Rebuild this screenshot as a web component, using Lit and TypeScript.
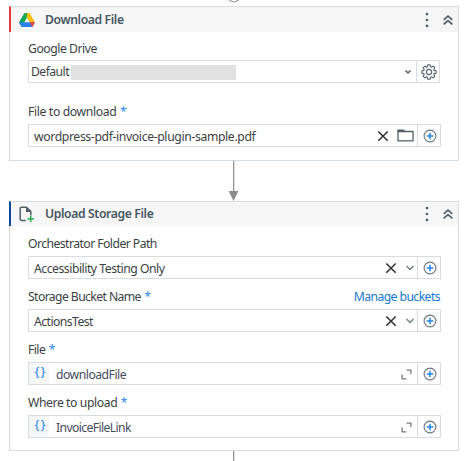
import { LitElement, html, css, svg, nothing } from "lit";
import { customElement, property } from "lit/decorators.js";

const icons = {
  drive: svg`<svg width="16" height="14" viewBox="0 0 16 14">
    <path d="M5.4 0L0 9.3 2.7 14 8 4.6z" fill="#11a853"/>
    <path d="M10.6 0L16 9.3h-5.3L5.4 0z" fill="#fdbc0a"/>
    <path d="M5.4 0H8v4.6z" fill="#11a853"/>
    <path d="M5.3 9.3H16L13.3 14H2.7z" fill="#2a7df5"/>
    <path d="M0 9.3h5.3L2.7 14z" fill="#2a7df5"/>
    <path d="M10.7 9.3H16L13.3 14z" fill="#ea4335"/></svg>`,
  storage: svg`<svg width="16" height="17" viewBox="0 0 16 17">
    <path d="M6.8 14.4H2.6q-1.4 0-1.4-1.4V2.6q0-1.4 1.4-1.4h4.7l4.5 4.2v4.2" fill="none" stroke="#526069" stroke-width="1.5"/>
    <path d="M7 .8l5.3 5.1H7z" fill="#526069"/>
    <path d="M11.7 9.8v6.2M8.6 12.9h6.2" stroke="#36b35c" stroke-width="1.6"/></svg>`,
  dots: svg`<svg width="4" height="16" viewBox="0 0 4 16" fill="#526069"><circle cx="2" cy="2.1" r="1.35"/><circle cx="2" cy="8" r="1.35"/><circle cx="2" cy="13.9" r="1.35"/></svg>`,
  collapse: svg`<svg width="10" height="10" viewBox="0 0 10 10" fill="none" stroke="#526069" stroke-width="1.7"><path d="M.6 4.9L5 1.2l4.4 3.7M.6 9.4L5 5.7l4.4 3.7"/></svg>`,
  clear: svg`<svg width="12" height="12" viewBox="0 0 12 12" stroke="#333" stroke-width="1.6"><path d="M1.3 1.5l9.4 9.2M10.7 1.5l-9.4 9.2"/></svg>`,
  chevron: svg`<svg width="8" height="6" viewBox="0 0 8 6" fill="none" stroke="#737b80" stroke-width="1.4"><path d="M.6 1L4 4.4 7.4 1"/></svg>`,
  caret: svg`<svg width="8" height="6" viewBox="0 0 8 6" fill="none" stroke="#59636a" stroke-width="1.5"><path d="M1.4 1.5L4 3.9l2.6-2.4"/></svg>`,
  folder: svg`<svg width="17" height="13" viewBox="0 0 17 13"><path d="M1 2.5h15v9.3H1z" fill="none" stroke="#526069" stroke-width="1.3"/><path d="M.4.6h6.4l1.8 2.2H.4z" fill="#526069"/></svg>`,
  expand: svg`<svg width="11" height="11" viewBox="0 0 11 11" fill="none" stroke="#737b80" stroke-width="1.3"><path d="M5.5 1.1h4.4v4M1.1 5.4v4.5h4.3"/></svg>`,
  plus: svg`<svg width="14" height="14" viewBox="0 0 14 14" fill="none"><circle cx="7" cy="7" r="5.9" stroke="#68757e" stroke-width="1.1"/><path d="M7 3.7v6.6M3.7 7h6.6" stroke="#2385f2" stroke-width="1.5"/></svg>`,
  gear: svg`<svg width="16" height="16" viewBox="0 0 16 16" fill="none" stroke="#5d6b74" stroke-width="1.2" stroke-linejoin="round"><path d="M6.8.9h2.4l.4 1.9.9.4 1.7-1.1 1.7 1.7-1.1 1.7.4.9 1.9.4v2.4l-1.9.4-.4.9 1.1 1.7-1.7 1.7-1.7-1.1-.9.4-.4 1.9H6.8l-.4-1.9-.9-.4-1.7 1.1-1.7-1.7 1.1-1.7-.4-.9-1.9-.4V6.8l1.9-.4.4-.9-1.1-1.7 1.7-1.7 1.7 1.1.9-.4z"/><circle cx="8" cy="8" r="2.6"/></svg>`,
};
type Icon = keyof typeof icons;

interface Field {
  label: string;
  labelSpacing: number;
  value: string;
  valueSpacing: number;
  tools: Icon[];
  action: Icon;
  required?: boolean;
  link?: string;
  variable?: boolean;
  masked?: boolean;
}

@customElement("activity-field")
class ActivityField extends LitElement {
  @property({ attribute: false }) field!: Field;
  static styles = css`
    :host { display: block; }
    svg { display: block; flex: none; }
    .label { box-sizing: border-box; height: 30px; padding-top: 6px; display: flex; align-items: center; line-height: 24px; color: #3b3f43; white-space: nowrap; }
    .masked .label { height: 28px; }
    .star { color: #2f86e8; margin-left: 3.5px; font-size: 12.2px; }
    .link { margin: 0 1px 0 auto; color: #1578cf; letter-spacing: -0.57px; }
    .box { box-sizing: border-box; height: 23px; border: 1px solid #d9dcdf; display: flex; align-items: stretch; background: #fff; }
    .masked .box { margin-right: 1px; }
    .value { flex: 1; display: flex; align-items: center; padding: 2px 0 0 5px; white-space: nowrap; color: #3b3f43; }
    .masked .value { padding: 1px 0 0 2px; }
    .mask { width: 165px; height: 15px; margin-left: 2px; background: #e1e1e1; }
    .braces { width: 20px; background: #f5f6f7; color: #2385f2; display: flex; align-items: center; justify-content: center; gap: 1.5px; font-size: 12.5px; padding: 0 0 3px 2px; box-sizing: border-box; line-height: 18px; }
    .variable .value { padding-left: 7px; color: #454d5c; }
    .tools { display: flex; align-items: center; gap: 9px; padding-right: 3px; }
    .wide .tools { gap: 8px; }
    .expandable .tools { padding: 2px 5px 0 0; }
    .masked .tools { padding: 1px 4px 0 0; }
    .action { width: 21px; border-left: 1px solid #d9dcdf; padding-left: 1px; display: flex; align-items: center; justify-content: center; }
  `;
  render() {
    const f = this.field;
    const cls = [
      f.masked ? "masked" : "",
      f.variable ? "variable expandable" : "",
      f.tools.includes("folder") ? "wide" : "",
    ].join(" ");
    return html`<div class=${cls}>
      <div class="label">
        <span style="letter-spacing:${f.labelSpacing}px">${f.label}</span>
        ${f.required ? html`<span class="star">*</span>` : nothing}
        ${f.link ? html`<span class="link">${f.link}</span>` : nothing}
      </div>
      <div class="box">
        ${f.variable ? html`<div class="braces"><span>{</span><span>}</span></div>` : nothing}
        <div class="value">
          <span style="letter-spacing:${f.valueSpacing}px">${f.value}</span>
          ${f.masked ? html`<span class="mask"></span>` : nothing}
        </div>
        <div class="tools">${f.tools.map((t) => icons[t])}</div>
        <div class="action">${icons[f.action]}</div>
      </div>
    </div>`;
  }
}

@customElement("activity-card")
class ActivityCard extends LitElement {
  @property() heading = "";
  @property() icon: Icon = "drive";
  @property() accent = "";
  @property({ attribute: false }) spacing = 0;
  @property({ attribute: false }) fields: Field[] = [];
  static styles = css`
    :host { display: block; box-sizing: border-box; width: 450px; border: 1px solid #d5dde3; background: #fff; }
    svg { display: block; }
    .header { height: 26px; margin: -1px 0 0 -1px; box-sizing: border-box; border-top: 1px solid #d5dde3; border-left: 2px solid; background: #f6f6f6; display: flex; align-items: center; padding: 0 5px 0 8px; }
    .red { border-left-color: #e0393e; }
    .blue { border-left-color: #0a4ba0; height: 25px; }
    .icon { width: 16px; }
    .title { margin-left: 10px; font-weight: 600; color: #475661; white-space: nowrap; }
    .menu { margin-left: auto; margin-right: 14px; }
    .body { padding: 0 17px 0 18px; }
    .body.loose { display: grid; gap: 11px; }
  `;
  render() {
    return html`<div class="header ${this.accent}">
        <span class="icon">${icons[this.icon]}</span>
        <span class="title" style="letter-spacing:${this.spacing}px">${this.heading}</span>
        <span class="menu">${icons.dots}</span>${icons.collapse}
      </div>
      <div class="body ${this.accent === "red" ? "loose" : ""}">
        ${this.fields.map((f) => html`<activity-field .field=${f}></activity-field>`)}
      </div>`;
  }
}

const download: Field[] = [
  { label: "Google Drive", labelSpacing: -0.46, value: "Default", valueSpacing: -0.55, tools: ["caret"], action: "gear", masked: true },
  { label: "File to download", labelSpacing: -0.36, value: "wordpress-pdf-invoice-plugin-sample.pdf", valueSpacing: -0.36, tools: ["clear", "folder"], action: "plus", required: true },
];
const upload: Field[] = [
  { label: "Orchestrator Folder Path", labelSpacing: -0.55, value: "Accessibility Testing Only", valueSpacing: -0.47, tools: ["clear", "chevron"], action: "plus" },
  { label: "Storage Bucket Name", labelSpacing: -0.6, value: "ActionsTest", valueSpacing: -0.55, tools: ["clear", "chevron"], action: "plus", required: true, link: "Manage buckets" },
  { label: "File", labelSpacing: -0.55, value: "downloadFile", valueSpacing: -0.5, tools: ["expand"], action: "plus", required: true, variable: true },
  { label: "Where to upload", labelSpacing: -0.41, value: "InvoiceFileLink", valueSpacing: -0.62, tools: ["expand"], action: "plus", required: true, variable: true },
];

@customElement("app-root")
class AppRoot extends LitElement {
  static styles = css`
    :host { display: flex; flex-direction: column; box-sizing: border-box; width: 469px; height: 461px; overflow: hidden; background: #fff; padding-left: 9px; font: 12.2px/16px "Noto Sans", "Open Sans", sans-serif; }
    svg { display: block; flex: none; }
    .first { height: 155px; flex: none; }
    .second { height: 250px; flex: none; }
  `;
  render() {
    return html`
      <svg width="450" height="6" viewBox="0 0 450 6"><circle cx="225" cy="-3.5" r="5.5" fill="#fff" stroke="#999" stroke-width="1.2"/></svg>
      <activity-card class="first" heading="Download File" icon="drive" accent="red" .spacing=${-0.38} .fields=${download}></activity-card>
      <svg width="450" height="40" viewBox="0 0 450 40"><path d="M224 0h1.3v31h-1.3z" fill="#949494"/><path d="M219.7 30h9.6l-4.8 10z" fill="#8c8c8c"/></svg>
      <activity-card class="second" heading="Upload Storage File" icon="storage" accent="blue" .spacing=${-0.37} .fields=${upload}></activity-card>
      <svg width="450" height="10" viewBox="0 0 450 10"><path d="M224 0h1.3v10h-1.3z" fill="#949494"/></svg>`;
  }
}
